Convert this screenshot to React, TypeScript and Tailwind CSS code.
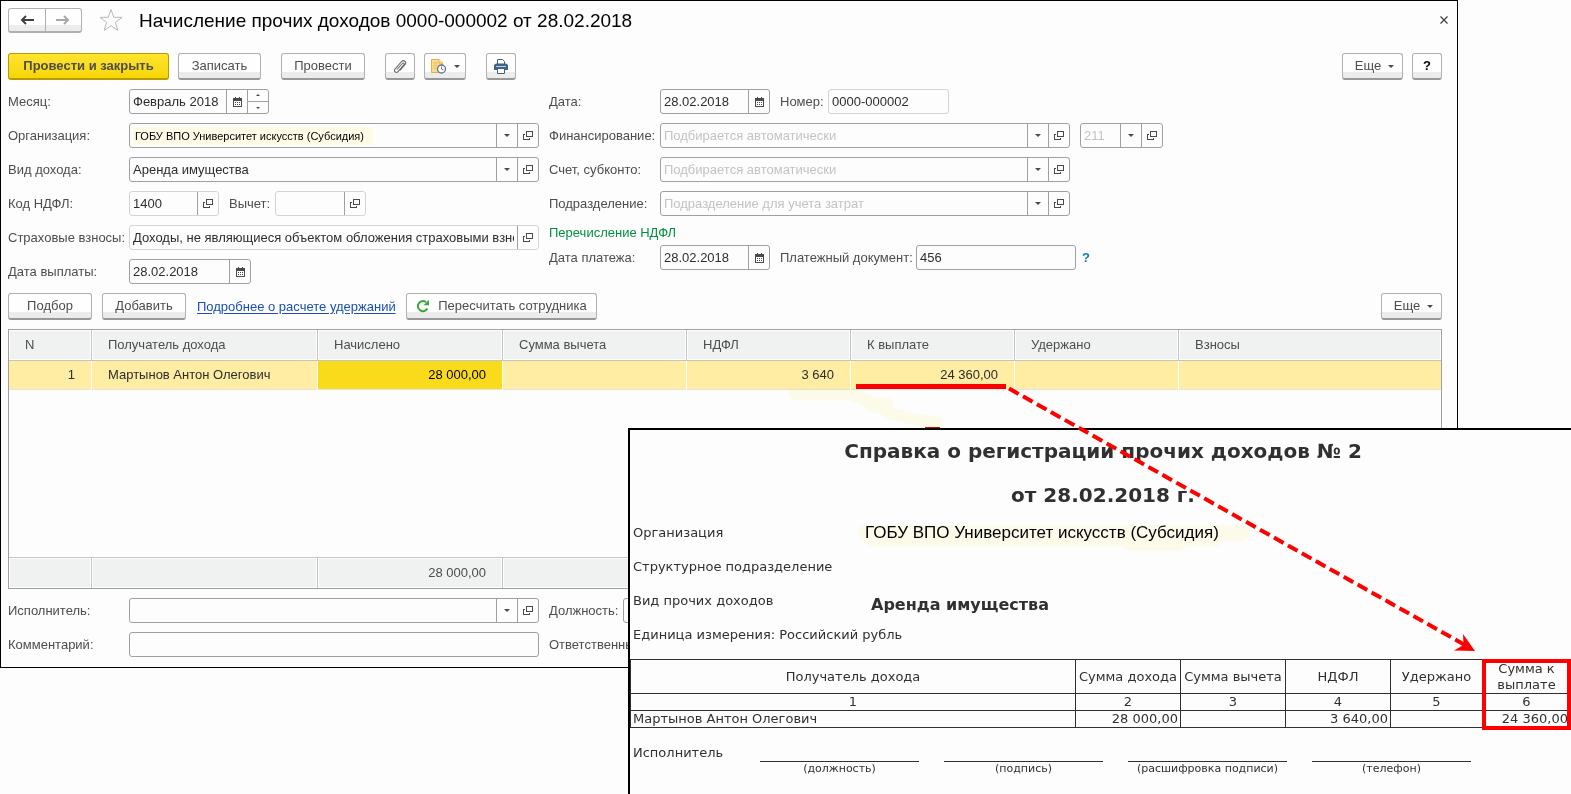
import type { ReactNode } from "react";

const columns = ["N", "Получатель дохода", "Начислено", "Сумма вычета", "НДФЛ", "К выплате", "Удержано", "Взносы"];
const signatures = ["(должность)", "(подпись)", "(расшифровка подписи)", "(телефон)"];

function CalendarIcon() {
  return (
    <svg width="9" height="10" viewBox="0 0 9 10" shapeRendering="crispEdges" aria-hidden="true">
      <path d="M0 1h9v9H0z" fill="#4a4a4a" />
      <path d="M2 0h1v1H2zM6 0h1v1H6z" fill="#4a4a4a" />
      <path d="M1 4h7v5H1z" fill="#fdfdfd" />
      <path d="M2 5h1v1H2zM4 5h1v1H4zM6 5h1v1H6zM2 7h1v1H2zM4 7h1v1H4zM6 7h1v1H6z" fill="#4a4a4a" />
    </svg>
  );
}

function OpenIcon() {
  return (
    <svg width="10" height="9" viewBox="0 0 10 9" shapeRendering="crispEdges" aria-hidden="true">
      <path d="M3.5 .5h6v5h-6z" fill="none" stroke="#4a4a4a" />
      <path d="M2 3.5H.5v5h6V7" fill="none" stroke="#4a4a4a" />
    </svg>
  );
}

function Caret() {
  return (
    <svg width="6" height="3" viewBox="0 0 6 3" aria-hidden="true">
      <path d="M0 0h6L3 3z" fill="#4a4a4a" />
    </svg>
  );
}

type FieldProps = {
  id: string;
  label: string;
  value?: string;
  placeholder?: string;
  parts?: ("list" | "open" | "date" | "spin")[];
  width: string;
  pale?: boolean;
  inputClass?: string;
};

const partNames = { list: "Выбрать из списка", open: "Открыть", date: "Календарь" };

function Field({ id, label, value, placeholder, parts = [], width, pale, inputClass = "px-[3px] text-[#2d2d2d]" }: FieldProps) {
  return (
    <div
      className={`flex h-[25px] overflow-hidden rounded-[3px] border ${pale ? "border-[#d4d4d4]" : "border-[#a0a0a0]"} ${width}`}
    >
      <input
        id={id}
        aria-label={label}
        defaultValue={value}
        placeholder={placeholder}
        className={`h-full w-0 min-w-0 flex-1 bg-transparent outline-none placeholder:text-[#c3c3c3] ${inputClass}`}
      />
      {parts.map((part) =>
        part === "spin" ? (
          <div key={part} className="flex w-[21px] shrink-0 flex-col border-l border-[#a0a0a0]">
            <button aria-label="Следующий месяц" className="flex flex-1 rotate-180 items-center justify-center border-t border-[#a0a0a0]">
              <svg width="4" height="2" viewBox="0 0 4 2" aria-hidden="true">
                <path d="M0 0h4L2 2z" fill="#4a4a4a" />
              </svg>
            </button>
            <button aria-label="Предыдущий месяц" className="flex flex-1 items-center justify-center">
              <svg width="4" height="2" viewBox="0 0 4 2" aria-hidden="true">
                <path d="M0 0h4L2 2z" fill="#4a4a4a" />
              </svg>
            </button>
          </div>
        ) : (
          <button
            key={part}
            aria-label={partNames[part]}
            className="flex w-[21px] shrink-0 items-center justify-center border-l border-[#a0a0a0]"
          >
            {part === "list" ? <Caret /> : part === "open" ? <OpenIcon /> : <CalendarIcon />}
          </button>
        ),
      )}
    </div>
  );
}

function Label({ htmlFor, width, children }: { htmlFor: string; width: string; children: ReactNode }) {
  return (
    <label htmlFor={htmlFor} className={`shrink-0 whitespace-nowrap ${width}`}>
      {children}
    </label>
  );
}

function Button({ label, className, children }: { label?: string; className: string; children: ReactNode }) {
  return (
    <button
      aria-label={label}
      className={`flex h-[27px] shrink-0 items-center justify-center rounded-[3px] border border-[#b0b0b0] border-b-2 border-b-[#989898] bg-linear-to-b from-[#fefefe] from-75% to-[#ececec] to-75% whitespace-nowrap ${className}`}
    >
      {children}
    </button>
  );
}

function Toolbar() {
  return (
    <div className="flex items-center">
      <button className="h-[27px] w-[161px] rounded-[3px] border border-b-2 border-[#b89b00] bg-linear-to-b from-[#ffe42e] to-[#f7d600] font-bold">
        Провести и закрыть
      </button>
      <Button className="ml-[9px] w-[83px]">Записать</Button>
      <Button className="ml-5 w-[84px]">Провести</Button>
      <Button label="Файлы" className="ml-5 w-[30px]">
        <svg width="14" height="15" viewBox="0 0 14 15" fill="none" stroke="#6a6a6a" strokeWidth="1.1" aria-hidden="true">
          <path d="M4 10.500 9.300 4.500c1-1.200 2.600.2 1.600 1.400L5 12.700c-1.800 2-4.800-.5-3-2.600L8.600 2.500c2-2.200 5.400.5 3.500 2.900L7 11.300" />
        </svg>
      </Button>
      <Button label="Создать на основании" className="ml-[9px] w-[42px] gap-[7px]">
        <svg width="17" height="16" viewBox="0 0 17 16" aria-hidden="true">
          <path d="M1.500 1.500H9L12.500 5v9.500h-11z" fill="#f8dc8c" stroke="#dfb04d" />
          <path d="M9 1.500V5h3.500" fill="#fff2c6" stroke="#dfb04d" />
          <path d="M3.500 5h4M3.500 7.500h4M3.500 10h3" stroke="#e3b95c" />
          <circle cx="11.500" cy="11" r="4" fill="#fff" stroke="#4d7896" strokeWidth="1.300" />
          <path d="M11.500 8.500V11l2 1" fill="none" stroke="#d44" />
        </svg>
        <Caret />
      </Button>
      <Button label="Печать" className="ml-5 w-[30px]">
        <svg width="16" height="15" viewBox="0 0 16 15" aria-hidden="true">
          <path d="M4.500 5V.5h5l2 2V5" fill="#fff" stroke="#3d5f7c" />
          <path d="M3 4.500h10l2 1.500v5H1V6z" fill="#3d6488" />
          <path d="M3 7h10v1H3z" fill="#bcd2e4" />
          <path d="M4.500 9.500h7v5h-7z" fill="#fff" stroke="#3d5f7c" />
        </svg>
      </Button>
      <Button className="ml-auto w-[61px] gap-[7px] pl-1">
        Еще <Caret />
      </Button>
      <Button label="Справка" className="ml-[9px] w-[30px] font-bold text-black">
        ?
      </Button>
    </div>
  );
}

function IncomeForm() {
  return (
    <div className="mt-[9px] flex gap-[10px]">
      <div className="flex w-[531px] shrink-0 flex-col gap-[9px]">
        <div className="flex items-center">
          <Label htmlFor="month" width="w-[121px]">Месяц:</Label>
          <Field id="month" label="Месяц" value="Февраль 2018" parts={["date", "spin"]} width="w-[140px]" />
        </div>
        <div className="flex items-center">
          <Label htmlFor="org" width="w-[121px]">Организация:</Label>
          <div className="flex flex-1 rounded-[3px] bg-[linear-gradient(#fdfbe6,#fdfbe6)] bg-[length:240px_18px] bg-[position:4px_4px] bg-no-repeat">
            <Field
              id="org"
              label="Организация"
              value="ГОБУ ВПО Университет искусств (Субсидия)"
              parts={["list", "open"]}
              width="w-full"
              inputClass="px-[5px] text-[11px] text-black"
            />
          </div>
        </div>
        <div className="flex items-center">
          <Label htmlFor="kind" width="w-[121px]">Вид дохода:</Label>
          <Field id="kind" label="Вид дохода" value="Аренда имущества" parts={["list", "open"]} width="flex-1" />
        </div>
        <div className="flex items-center">
          <Label htmlFor="code" width="w-[121px]">Код НДФЛ:</Label>
          <Field id="code" label="Код НДФЛ" value="1400" parts={["open"]} width="w-[90px]" pale />
          <div className="w-[10px]" />
          <Label htmlFor="deduction" width="w-[46px]">Вычет:</Label>
          <Field id="deduction" label="Вычет" parts={["open"]} width="w-[91px]" pale />
        </div>
        <div className="flex items-center">
          <Label htmlFor="insurance" width="w-[121px]">Страховые взносы:</Label>
          <Field
            id="insurance"
            label="Страховые взносы"
            value="Доходы, не являющиеся объектом обложения страховыми взносами"
            parts={["open"]}
            width="flex-1"
            pale
          />
        </div>
        <div className="flex items-center">
          <Label htmlFor="paid" width="w-[121px]">Дата выплаты:</Label>
          <Field id="paid" label="Дата выплаты" value="28.02.2018" parts={["date"]} width="w-[122px]" />
        </div>
      </div>

      <div className="flex min-w-0 flex-1 flex-col gap-[9px]">
        <div className="flex items-center">
          <Label htmlFor="date" width="w-[111px]">Дата:</Label>
          <Field id="date" label="Дата" value="28.02.2018" parts={["date"]} width="w-[110px]" />
          <div className="w-[10px]" />
          <Label htmlFor="number" width="w-[48px]">Номер:</Label>
          <Field id="number" label="Номер" value="0000-000002" width="w-[121px]" pale />
        </div>
        <div className="flex items-center">
          <Label htmlFor="funding" width="w-[111px]">Финансирование:</Label>
          <Field id="funding" label="Финансирование" placeholder="Подбирается автоматически" parts={["list", "open"]} width="w-[410px]" />
          <div className="w-[10px]" />
          <Field id="kosgu" label="КОСГУ" placeholder="211" parts={["list", "open"]} width="w-[83px]" />
        </div>
        <div className="flex items-center">
          <Label htmlFor="account" width="w-[111px]">Счет, субконто:</Label>
          <Field id="account" label="Счет, субконто" placeholder="Подбирается автоматически" parts={["list", "open"]} width="w-[410px]" />
        </div>
        <div className="flex items-center">
          <Label htmlFor="division" width="w-[111px]">Подразделение:</Label>
          <Field id="division" label="Подразделение" placeholder="Подразделение для учета затрат" parts={["list", "open"]} width="w-[410px]" />
        </div>
        <div>
          <h2 className="h-5 leading-4 text-[#00923f]">Перечисление НДФЛ</h2>
          <div className="flex items-center">
            <Label htmlFor="payDate" width="w-[111px]">Дата платежа:</Label>
            <Field id="payDate" label="Дата платежа" value="28.02.2018" parts={["date"]} width="w-[110px]" />
            <div className="w-[10px]" />
            <Label htmlFor="payDoc" width="w-[136px]">Платежный документ:</Label>
            <Field id="payDoc" label="Платежный документ" value="456" width="w-[160px]" />
            <button aria-label="Подсказка" className="ml-[6px] font-bold text-[#0a7bc2]">?</button>
          </div>
        </div>
      </div>
    </div>
  );
}

const gridCell = "border-r border-[#c4c4c4] shadow-[inset_0_0_0_1px_#ffffff] last:border-r-0";

function IncomeTable() {
  const amounts = ["1", "Мартынов Антон Олегович", "28 000,00", "", "3 640", "24 360,00", "", ""];
  return (
    <table className="mt-[9px] w-full table-fixed border-separate border-spacing-0 border border-[#a0a0a0]">
      <colgroup>
        <col className="w-[83px]" />
        <col className="w-[226px]" />
        <col className="w-[185px]" />
        <col className="w-[184px]" />
        <col className="w-[164px]" />
        <col className="w-[164px]" />
        <col className="w-[164px]" />
        <col />
      </colgroup>
      <thead>
        <tr className="h-[31px]">
          {columns.map((name) => (
            <th key={name} className={`${gridCell} border-b bg-[#f0f2f1] px-4 text-left font-normal`}>
              {name}
            </th>
          ))}
        </tr>
      </thead>
      <tbody>
        <tr className="h-[29px]">
          {amounts.map((text, i) => (
            <td
              key={i}
              className={`border-b border-y-[#e4e4e4] border-r border-r-white px-4 text-[#2d2d2d] last:border-r-0 ${i === 1 ? "text-left" : "text-right"} ${i === 2 ? "bg-[#fadb1b] text-black" : "bg-[#feeda3]"}`}
            >
              {text}
            </td>
          ))}
        </tr>
        <tr className="h-[167px]">
          <td colSpan={8} />
        </tr>
      </tbody>
      <tfoot>
        <tr className="h-[31px]">
          {columns.map((name, i) => (
            <td key={name} className={`${gridCell} border-t bg-[#f0f2f1] px-4 text-right`}>
              {i === 2 ? "28 000,00" : ""}
            </td>
          ))}
        </tr>
      </tfoot>
    </table>
  );
}

function IncomeWindow() {
  return (
    <main className="mr-[113px] border border-black pr-[15px] pb-[10px] pl-[7px] text-[13px] leading-4 text-[#4d4d4d]">
      <header className="flex items-center pt-[6px]">
        <div className="flex h-[25px] w-[74px] shrink-0 rounded-[3px] border border-b-2 border-[#b0b0b0] bg-linear-to-b from-[#fefefe] from-75% to-[#ececec] to-75%">
          <button aria-label="Назад" className="flex flex-1 items-center justify-center">
            <svg width="14" height="10" viewBox="0 0 14 10" fill="none" stroke="#404040" strokeWidth="2" aria-hidden="true">
              <path d="M14 5H2M6 1 2 5l4 4" />
            </svg>
          </button>
          <button aria-label="Вперед" className="flex flex-1 items-center justify-center border-l border-[#b0b0b0]">
            <svg width="14" height="10" viewBox="0 0 14 10" fill="none" stroke="#a8a8a8" strokeWidth="2" aria-hidden="true">
              <path d="M0 5h12M8 1l4 4-4 4" />
            </svg>
          </button>
        </div>
        <button aria-label="В избранное" className="ml-[17px]">
          <svg width="24" height="24" viewBox="0 0 24 24" fill="none" stroke="#b4b8bd" aria-hidden="true">
            <path d="m12 1.500 2.700 7.800 8.300.1-6.600 5 2.400 8-6.800-4.700-6.800 4.700 2.400-8L1 9.400l8.300-.1z" />
          </svg>
        </button>
        <h1 className="ml-4 pt-[2px] text-[19px] leading-6 text-black">Начисление прочих доходов 0000-000002 от 28.02.2018</h1>
        <button aria-label="Закрыть" className="mr-[-6px] ml-auto">
          <svg width="8" height="8" viewBox="0 0 8 8" stroke="#3c3c3c" strokeWidth="1.200" aria-hidden="true">
            <path d="m.5.5 7 7M7.500.5l-7 7" />
          </svg>
        </button>
      </header>
      <div className="mt-5">
        <Toolbar />
      </div>
      <IncomeForm />
      <div className="mt-[9px] flex items-center">
        <Button className="w-[84px]">Подбор</Button>
        <Button className="ml-[10px] w-[84px]">Добавить</Button>
        <a href="#deductions" className="ml-[11px] w-[199px] whitespace-nowrap text-[#1b4fb5] underline underline-offset-2">
          Подробнее о расчете удержаний
        </a>
        <Button className="ml-[10px] w-[191px] gap-2">
          <svg width="14" height="14" viewBox="0 0 14 14" aria-hidden="true">
            <path d="M11.300 9.500A5 5 0 1 1 10 3.200" fill="none" stroke="#3aa53a" strokeWidth="2" />
            <path d="M13 .8v5.400H7.600z" fill="#3aa53a" />
          </svg>
          Пересчитать сотрудника
        </Button>
        <Button className="ml-auto w-[61px] gap-[7px] pl-1">
          Еще <Caret />
        </Button>
      </div>
      <IncomeTable />
      <div className="mt-[9px] flex items-center">
        <Label htmlFor="executor" width="w-[121px]">Исполнитель:</Label>
        <Field id="executor" label="Исполнитель" parts={["list", "open"]} width="w-[410px]" />
        <div className="w-[10px]" />
        <Label htmlFor="position" width="w-[74px]">Должность:</Label>
        <Field id="position" label="Должность" parts={["list", "open"]} width="w-[320px]" />
      </div>
      <div className="mt-[9px] flex items-center">
        <Label htmlFor="comment" width="w-[121px]">Комментарий:</Label>
        <Field id="comment" label="Комментарий" width="w-[410px]" />
        <div className="w-[10px]" />
        <Label htmlFor="responsible" width="w-[106px]">Ответственный:</Label>
        <Field id="responsible" label="Ответственный" parts={["list", "open"]} width="w-[289px]" />
      </div>
    </main>
  );
}

const docCell = "border border-[#303030] p-0 font-normal";

function CertificateSheet() {
  return (
    <section className="absolute top-[428px] right-0 bottom-0 left-[628px] overflow-hidden border-t-2 border-l-2 border-black bg-[#fdfdfd] font-['DejaVu_Sans',Verdana,sans-serif] text-[13px] leading-4 text-[#303030]">
      <div className="pl-[3px]">
        <div className="w-[940px] text-center text-[20px] font-bold">
          <p className="mt-[9px] leading-6">Справка о регистрации прочих доходов № 2</p>
          <p className="mt-5 leading-6">от 28.02.2018 г.</p>
        </div>
        <dl className="mt-[18px] grid auto-rows-[16px] grid-cols-[232px_1fr] items-center gap-y-[18px]">
          <dt>Организация</dt>
          <dd className="font-['Liberation_Sans',sans-serif] text-[17px] text-black">
            ГОБУ ВПО Университет искусств (Субсидия)
          </dd>
          <dt className="col-span-2">Структурное подразделение</dt>
          <dt>Вид прочих доходов</dt>
          <dd className="pt-[7px] pl-[6px] text-[16px] font-bold">Аренда имущества</dd>
          <dt className="col-span-2">Единица измерения: Российский рубль</dt>
        </dl>
      </div>
      <table className="mt-4 w-full table-fixed border-collapse text-center">
        <colgroup>
          <col />
          <col className="w-[105px]" />
          <col className="w-[105px]" />
          <col className="w-[105px]" />
          <col className="w-[92px]" />
          <col className="w-[88px]" />
        </colgroup>
        <thead>
          <tr className="h-[34px]">
            <th className={docCell}>Получатель дохода</th>
            <th className={docCell}>Сумма дохода</th>
            <th className={docCell}>Сумма вычета</th>
            <th className={docCell}>НДФЛ</th>
            <th className={docCell}>Удержано</th>
            <th className={docCell}>Сумма к выплате</th>
          </tr>
        </thead>
        <tbody>
          <tr className="h-[17px]">
            {[1, 2, 3, 4, 5, 6].map((n) => (
              <td key={n} className={docCell}>{n}</td>
            ))}
          </tr>
          <tr className="h-[17px]">
            <td className={`${docCell} pl-[2px] text-left`}>Мартынов Антон Олегович</td>
            <td className={`${docCell} pr-[2px] text-right`}>28 000,00</td>
            <td className={docCell} />
            <td className={`${docCell} pr-[2px] text-right`}>3 640,00</td>
            <td className={docCell} />
            <td className={`${docCell} pr-[2px] text-right`}>24 360,00</td>
          </tr>
        </tbody>
      </table>
      <div className="mt-[17px] flex items-start pl-[3px]">
        <span className="w-[127px] shrink-0">Исполнитель</span>
        <div className="mt-4 flex gap-[25px]">
          {signatures.map((text) => (
            <div key={text} className="w-[159px] border-t border-[#303030] text-center text-[11px] leading-[14px]">
              {text}
            </div>
          ))}
        </div>
      </div>
    </section>
  );
}

function Annotations() {
  return (
    <svg className="pointer-events-none absolute top-0 left-0" width="1571" height="794" viewBox="0 0 1571 794" aria-hidden="true">
      <path d="M856 386.500h150" stroke="#f00" strokeWidth="5" />
      <path d="M1009 388.500 1465 645" stroke="#f00" strokeWidth="4" strokeDasharray="11 5" />
      <path d="m1475 651-21-.5 9.500-5.500-.5-11z" fill="#f00" />
      <path d="M1484 661h85v67h-85z" fill="none" stroke="#f00" strokeWidth="4" />
    </svg>
  );
}

function Highlights() {
  return (
    <svg className="pointer-events-none absolute top-0 left-0 mix-blend-multiply" width="1571" height="794" viewBox="0 0 1571 794" aria-hidden="true">
      <path d="M794 394h54l24 8 20 12 22 5 23 4" fill="none" stroke="#fefceb" strokeWidth="12" strokeLinecap="round" strokeLinejoin="round" />
      <path d="M872 405h14" fill="none" stroke="#fefceb" strokeWidth="15" strokeLinecap="round" />
      <path d="M866 533h376M874 539h340M1132 543h46" fill="none" stroke="#fefceb" strokeWidth="16" strokeLinecap="round" />
      <path d="M925 427.500h15" stroke="#d00" />
    </svg>
  );
}

export default function App() {
  return (
    <div className="relative min-h-screen overflow-hidden bg-[#fdfdfd] font-['Liberation_Sans',Arial,sans-serif]">
      <IncomeWindow />
      <CertificateSheet />
      <Highlights />
      <Annotations />
    </div>
  );
}
